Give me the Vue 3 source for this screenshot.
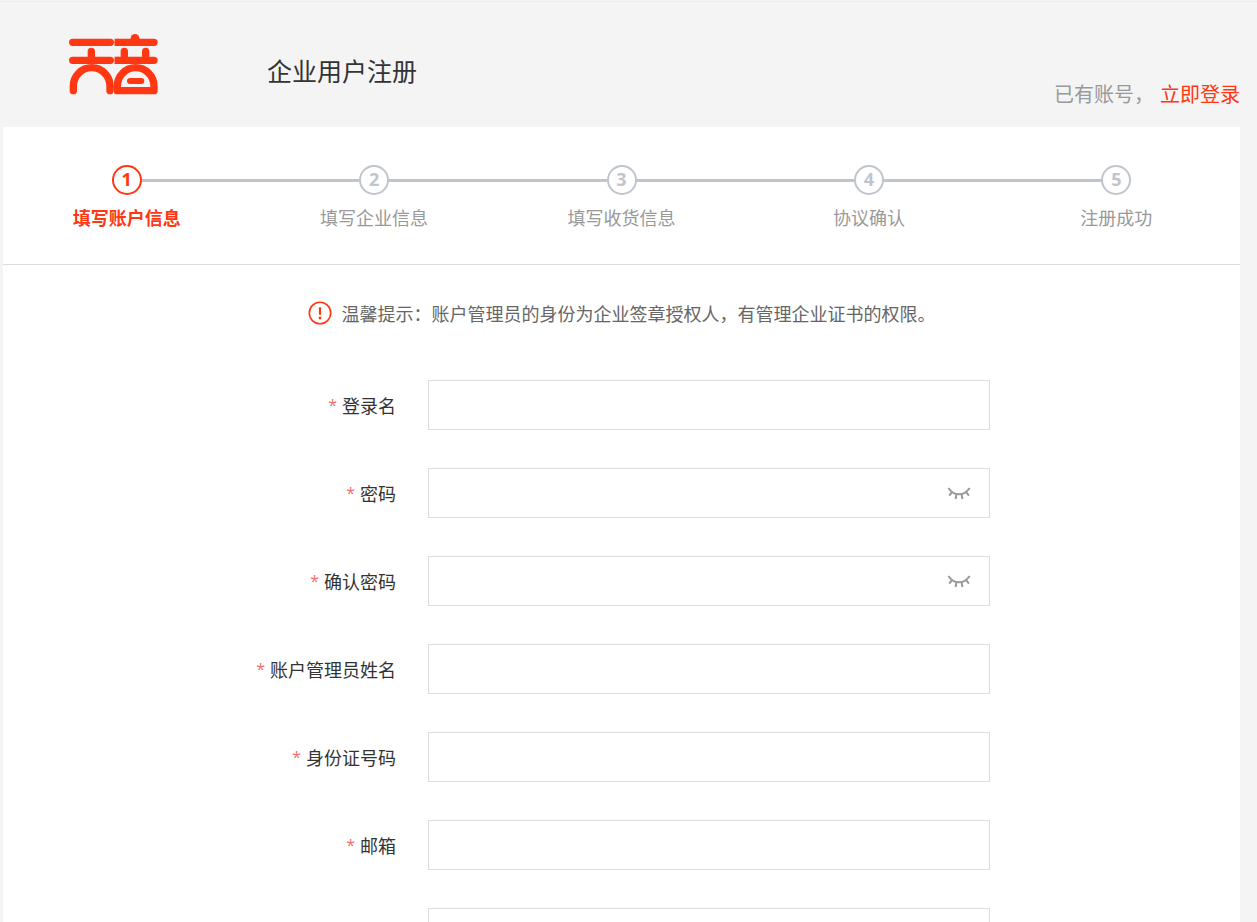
<script setup>
import { reactive } from 'vue'

const steps = ['填写账户信息', '填写企业信息', '填写收货信息', '协议确认', '注册成功']
const activeStep = 0

const fields = reactive([
  { id: 'login-name', label: '登录名', value: '' },
  { id: 'password', label: '密码', value: '', secret: true, visible: false },
  { id: 'confirm-password', label: '确认密码', value: '', secret: true, visible: false },
  { id: 'manager-name', label: '账户管理员姓名', value: '' },
  { id: 'id-number', label: '身份证号码', value: '' },
  { id: 'email', label: '邮箱', value: '' },
  { id: 'mobile', label: '手机号', value: '' },
])
</script>

<template>
  <div class="page">
    <header class="header">
      <svg class="logo" viewBox="54 36 276 192" role="img" aria-label="天音">
        <g fill="none" stroke="currentColor" stroke-width="22" stroke-linecap="round" stroke-linejoin="round">
          <path d="M68 67H181M68 121H181M124 94V121" />
          <path d="M70 212V198A55 55 0 0 1 180 198V212" />
          <path d="M204 67H312M204 121H312M223 94V121M287 94V121" />
          <path d="M202 212V198A55 55 0 0 1 312 198V212Z" />
          <path d="M240 183H274" stroke-width="18" />
        </g>
        <g fill="currentColor">
          <path d="M193 56H206V78H193L196 67ZM193 110H206V132H193L196 121Z" />
          <path d="M242 60V55A13 13 0 0 1 268 55V60Z" />
        </g>
      </svg>
      <h1 class="title">企业用户注册</h1>
      <p class="account">已有账号，<a href="#login">立即登录</a></p>
    </header>

    <main class="panel">
      <ol class="steps">
        <li v-for="(step, i) in steps" :key="step" class="step" :class="{ active: i === activeStep }">
          <span class="marker"><span class="number">{{ i + 1 }}</span></span>
          <span class="step-name">{{ step }}</span>
        </li>
      </ol>

      <p class="tip">
        <svg class="tip-icon" viewBox="0 0 24 24" aria-hidden="true">
          <circle cx="12" cy="12" r="10.700" fill="none" stroke="currentColor" stroke-width="1.600" />
          <path d="M12 7V13" stroke="currentColor" stroke-width="2.200" stroke-linecap="round" />
          <circle cx="12" cy="17" r="1.400" fill="currentColor" />
        </svg>
        <span>温馨提示：账户管理员的身份为企业签章授权人，有管理企业证书的权限。</span>
      </p>

      <form class="form" @submit.prevent>
        <div v-for="field in fields" :key="field.id" class="row">
          <label class="label" :for="field.id"><span class="star">*</span>{{ field.label }}</label>
          <div class="control">
            <input
              :id="field.id"
              v-model="field.value"
              class="input"
              :class="{ secret: field.secret }"
              :type="field.secret && !field.visible ? 'password' : 'text'"
              required
            />
            <button
              v-if="field.secret"
              class="eye"
              type="button"
              aria-label="显示密码"
              @click="field.visible = !field.visible"
            >
              <svg viewBox="81 79 72 42" aria-hidden="true">
                <path
                  d="M85 85Q98 104 117 104T149 85M95 98L88 108M109 104L107 118M125 104L127 118M139 98L147 108"
                  fill="none"
                  stroke="currentColor"
                  stroke-width="6"
                />
              </svg>
            </button>
          </div>
        </div>
      </form>
    </main>
  </div>
</template>

<style>
body {
  background: #f4f4f4;
}
</style>

<style scoped>
.page {
  box-sizing: border-box;
  padding: 0 17px 0 3px;
  color: #333;
  font-family: "Noto Sans CJK SC", sans-serif;
  font-size: 18px;
  line-height: 24px;
  background: linear-gradient(#f4f4f4 1px, #ebebeb 1px, #ebebeb 2px, #f4f4f4 2px);
}

.header {
  display: flex;
  align-items: flex-start;
  box-sizing: border-box;
  height: 127px;
  padding: 32px 0 0 65px;
}

.logo {
  width: 92px;
  height: 64px;
  color: #ff3713;
}

.title {
  margin: 22px 0 0 107px;
  font-size: 25px;
  font-weight: 400;
  line-height: 32px;
}

.account {
  margin: 50px 0 0 auto;
  color: #999;
  font-size: 20px;
}

.account a {
  margin-left: 6px;
  color: #ff3713;
  text-decoration: none;
}

.panel {
  background: #fff;
}

.steps {
  display: flex;
  margin: 0;
  padding: 38px 0 35px;
  border-bottom: 1px solid #dcdcdc;
  list-style: none;
}

.step {
  display: flex;
  flex: 1;
  flex-direction: column;
  gap: 10px;
  color: #999;
  text-align: center;
}

.marker {
  display: flex;
  align-items: center;
  color: #c0c4cc;
}

.marker::before,
.marker::after {
  flex: 1;
  height: 3px;
  background: currentColor;
  content: "";
}

.step:first-child .marker::before,
.step:last-child .marker::after {
  background: none;
}

.number {
  box-sizing: border-box;
  width: 30px;
  height: 30px;
  border: 2px solid currentColor;
  border-radius: 50%;
  font-family: "Open Sans", sans-serif;
  font-weight: 700;
  line-height: 24px;
}

.active {
  color: #ff3713;
  font-weight: 700;
}

.active .number {
  border-color: #ff3713;
  color: #ff3713;
}

.tip {
  display: flex;
  align-items: center;
  justify-content: center;
  gap: 10px;
  margin: 0;
  padding: 36px 0 55px;
  color: #666;
}

.tip-icon {
  flex: none;
  width: 24px;
  height: 24px;
  color: #ff3713;
}

.form {
  display: flex;
  flex-direction: column;
  gap: 38px;
  width: 737px;
  max-width: 100%;
  margin: 0 auto;
  padding-bottom: 38px;
}

.row {
  display: flex;
  align-items: center;
}

.label {
  flex: none;
  box-sizing: border-box;
  width: 175px;
  padding-right: 32px;
  text-align: right;
  white-space: nowrap;
}

.star {
  margin-right: 5px;
  color: #f56c6c;
  font-family: "Open Sans", sans-serif;
  font-size: 16px;
  line-height: 16px;
  vertical-align: 2px;
}

.control {
  position: relative;
  flex: 1;
}

.input {
  display: block;
  box-sizing: border-box;
  width: 100%;
  height: 50px;
  padding: 0 18px;
  border: 1px solid #dcdcdc;
  border-radius: 0;
  outline: none;
  background: #fff;
  color: inherit;
  font: inherit;
}

.input:focus {
  border-color: #ff3713;
}

.secret {
  padding-right: 56px;
}

.eye {
  position: absolute;
  top: 0;
  right: 19px;
  display: flex;
  align-items: center;
  height: 100%;
  padding: 0;
  border: 0;
  background: none;
  color: #999;
  cursor: pointer;
}

.eye svg {
  width: 24px;
  height: 14px;
}
</style>
